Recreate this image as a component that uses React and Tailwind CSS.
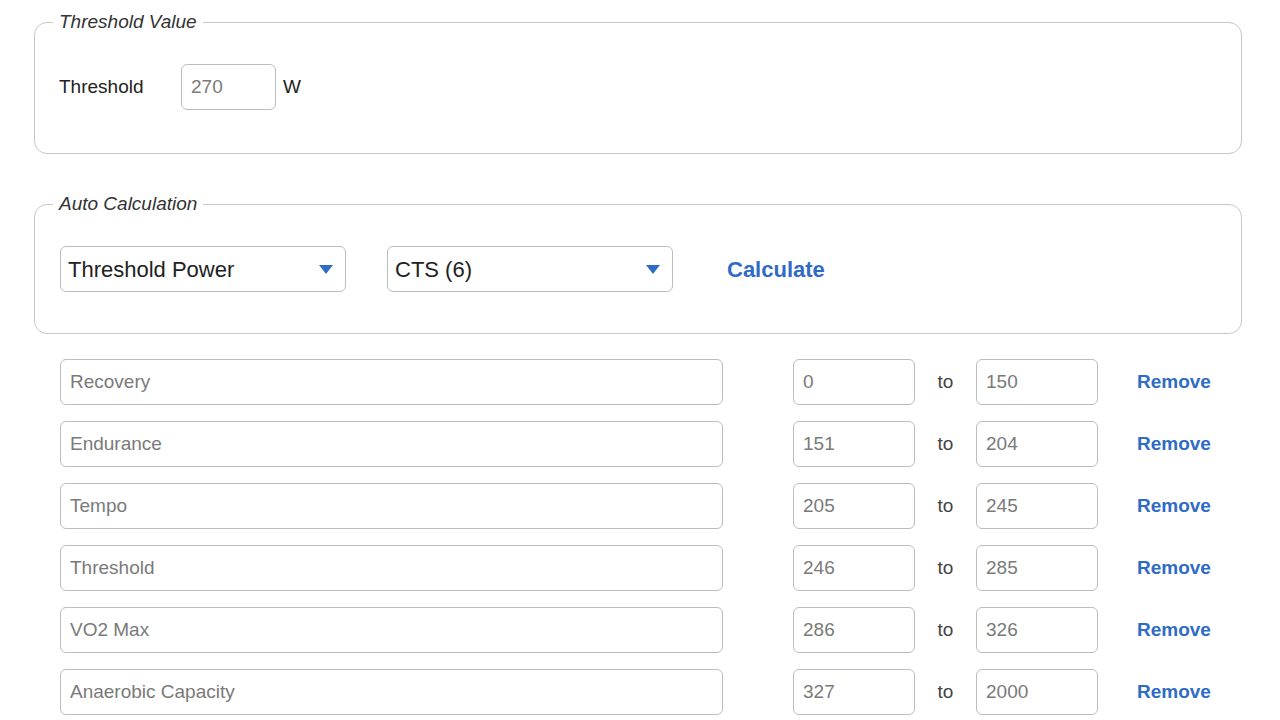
import React from 'react';

const zones = [
  { name: 'Recovery', min: '0', max: '150' },
  { name: 'Endurance', min: '151', max: '204' },
  { name: 'Tempo', min: '205', max: '245' },
  { name: 'Threshold', min: '246', max: '285' },
  { name: 'VO2 Max', min: '286', max: '326' },
  { name: 'Anaerobic Capacity', min: '327', max: '2000' },
];

const inputCls =
  'h-[46px] rounded-[6px] border border-[#bdbdbd] bg-white text-[19px] text-[#7a7a7a] outline-none';

const Select = ({ label }) => (
  <div className="flex h-[46px] w-[286px] items-center justify-between rounded-[6px] border border-[#bdbdbd] bg-white pl-[7px] pr-[12px]">
    <span className="text-[22px] text-[#222]">{label}</span>
    <svg width="14" height="9" viewBox="0 0 14 9">
      <path d="M0 0 H14 L7 9 Z" fill="#2f6cc6" />
    </svg>
  </div>
);

const App = () => {
  return (
    <div className="min-h-[720px] bg-white pl-[34px] pr-[38px] pt-[11px] font-['Liberation_Sans',Arial,sans-serif] text-[#222]">
      <fieldset className="rounded-[13px] border border-[#c8c8c8] px-[24px] pt-[31px] pb-[43px]">
        <legend className="-ml-[6px] px-[6px] text-[19px] leading-[22px] italic text-[#333]">
          Threshold Value
        </legend>
        <div className="flex items-center">
          <span className="w-[122px] text-[19px]">Threshold</span>
          <input className={inputCls + ' w-[95px] px-[9px]'} defaultValue="270" />
          <span className="ml-[7px] text-[19px]">W</span>
        </div>
      </fieldset>

      <fieldset className="mt-[39px] rounded-[13px] border border-[#c8c8c8] px-[24px] pt-[31px] pb-[41px]">
        <legend className="-ml-[6px] px-[6px] text-[19px] leading-[22px] italic text-[#333]">
          Auto Calculation
        </legend>
        <div className="flex items-center pl-[1px]">
          <Select label="Threshold Power" />
          <div className="ml-[41px]">
            <Select label="CTS (6)" />
          </div>
          <button className="ml-[54px] text-[22px] font-bold text-[#2f6cc6]">Calculate</button>
        </div>
      </fieldset>

      <div className="mt-[25px] flex flex-col gap-[16px] pl-[26px]">
        {zones.map((z) => (
          <div key={z.name} className="flex items-center">
            <input className={inputCls + ' w-[663px] px-[9px]'} defaultValue={z.name} />
            <input className={inputCls + ' ml-[70px] w-[122px] px-[9px]'} defaultValue={z.min} />
            <span className="w-[61px] text-center text-[19px] text-[#444]">to</span>
            <input className={inputCls + ' w-[122px] px-[9px]'} defaultValue={z.max} />
            <button className="ml-[39px] text-[19px] font-bold text-[#2f6cc6]">Remove</button>
          </div>
        ))}
      </div>
    </div>
  );
};

export default App;
